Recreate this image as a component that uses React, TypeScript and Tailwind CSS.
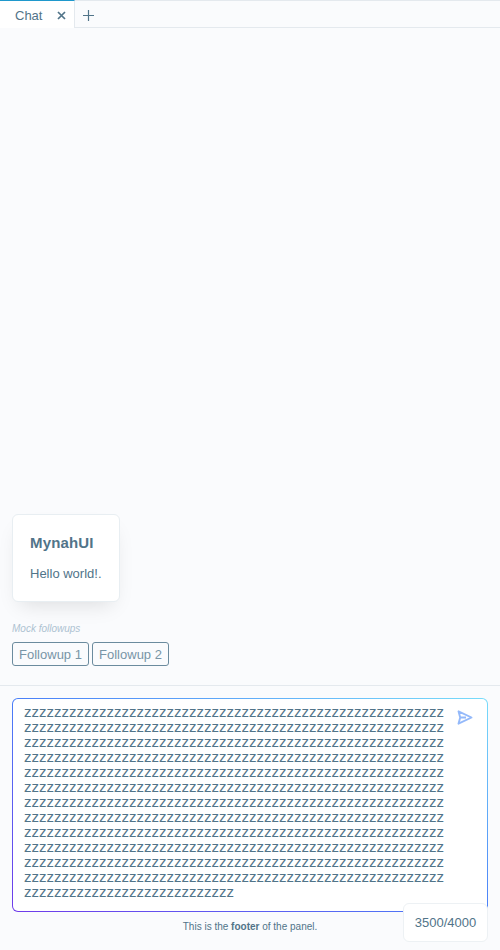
const fullLine = 'z'.repeat(56);
const promptLines = Array.from({ length: 12 }, () => fullLine).concat('z'.repeat(28));

function Tabs() {
  return (
    <header className="flex h-7 shrink-0">
      <div className="flex h-7 w-[75px] items-center justify-between border-t border-r border-t-[#1f98cc] border-r-[#e4e9ee] bg-white pt-[2px] pr-2 pl-[15px]">
        <span className="leading-[15px]">Chat</span>
        <svg width="9" height="9" viewBox="0 0 9 9" className="mb-px" fill="none" stroke="currentColor" strokeWidth="1.7">
          <path d="M1 1l7 7M8 1l-7 7" />
        </svg>
      </div>
      <div className="flex grow items-center border-y border-[#e4e9ee] pl-2">
        <svg width="11" height="11" viewBox="0 0 11 11" className="mt-[3px]" fill="none" stroke="currentColor" strokeWidth="1.2">
          <path d="M5.5 0v11M0 5.5h11" />
        </svg>
      </div>
    </header>
  );
}

function Followup({ label }: { label: string }) {
  return (
    <button className="h-6 w-[77px] rounded-[3px] border border-[#6b8b9e] pt-px text-[13px] leading-[21px] text-[#7895a6]">
      {label}
    </button>
  );
}

export default function App() {
  return (
    <div className="flex h-[950px] w-[500px] flex-col overflow-hidden bg-[#fafbfd] font-['Liberation_Sans',Arial,sans-serif] text-[13px] text-[#517489]">
      <Tabs />
      <main className="flex grow flex-col items-start justify-end px-3 pb-[19px]">
        <section className="h-[88px] w-[108px] rounded-md border border-[#e8eef2] bg-white px-[17px] pt-[19px] shadow-[0_10px_20px_-8px_rgba(0,0,0,0.13)]">
          <h1 className="text-[15px] leading-[18px] font-bold tracking-[0.15px]">MynahUI</h1>
          <p className="mt-[13px] leading-[18px] whitespace-nowrap">Hello world!.</p>
        </section>
        <p className="mt-[21px] text-[10px] leading-3 text-[#adc2d1] italic">Mock followups</p>
        <div className="mt-[7px] flex gap-[3px]">
          <Followup label="Followup 1" />
          <Followup label="Followup 2" />
        </div>
      </main>
      <footer className="relative h-[265px] shrink-0 border-t border-[#e4e9ee] px-3 pt-3">
        <div className="h-[214px] rounded-md bg-[linear-gradient(to_top_right,#6f3bea_0%,#4a7ff8_50%,#78dcfa_100%)] p-px">
          <div className="flex h-full justify-between rounded-[5px] bg-white pt-[5px] pr-[14px] pl-[11px]">
            <div className="text-[15px] leading-[15px]">
              {promptLines.map((line, index) => (
                <div key={index}>{line}</div>
              ))}
            </div>
            <svg width="16" height="15" viewBox="0 0 16 15" className="mt-[6px]" fill="none" stroke="#94b9fa" strokeWidth="1.9" strokeLinejoin="round">
              <path d="M1.5 1.3L14.5 7.5L1.5 13.7L3.2 7.5ZM3.2 7.5H9" />
            </svg>
          </div>
        </div>
        <p className="mt-[9px] text-center text-[10px] leading-3">
          This is the <b>footer</b> of the panel.
        </p>
        <div className="absolute top-[217px] left-[403px] flex h-[39px] w-[85px] items-center justify-center rounded-md border border-[#edf1f4] bg-white">
          3500/4000
        </div>
      </footer>
    </div>
  );
}
